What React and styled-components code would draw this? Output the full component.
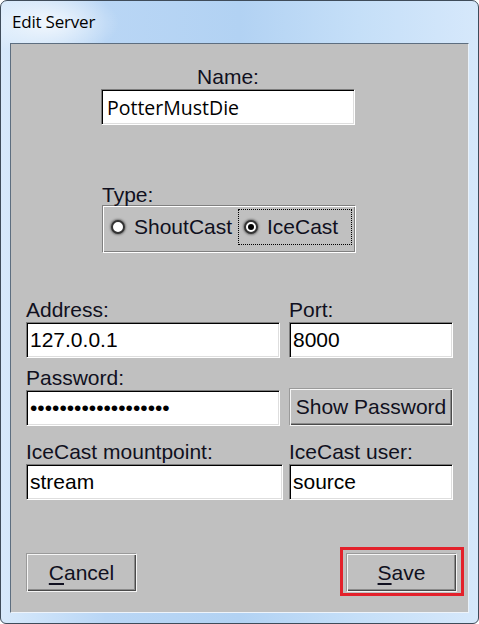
import React from "react";
import styled, { createGlobalStyle } from "styled-components";

const GlobalStyle = createGlobalStyle`
  html, body {
    margin: 0;
    padding: 0;
    background: #ffffff;
  }
  * {
    box-sizing: border-box;
  }
`;

const Window = styled.div`
  width: 479px;
  height: 624px;
  display: flex;
  flex-direction: column;
  padding: 0 9px 10px 9px;
  border: 1px solid #3f4c5a;
  border-radius: 7px 7px 6px 6px;
  background:
    radial-gradient(ellipse 70px 34px at 48px 22px, rgba(255, 255, 255, 0.75), rgba(255, 255, 255, 0) 100%),
    linear-gradient(90deg, #d7e9fb 0%, #b9d6f5 22%, #b2d2f3 50%, #c5dff8 75%, #d6e8fb 100%);
  overflow: hidden;
`;

const TitleBar = styled.div`
  height: 42px;
  flex: none;
  padding: 9px 0 0 2px;
  font: 17px "Open Sans", "Noto Sans", sans-serif;
  letter-spacing: -0.2px;
  color: #000;
`;

const Client = styled.div`
  flex: 1;
  display: flex;
  flex-direction: column;
  background: #c0c0c0;
  border: 1px solid;
  border-color: #5d6e80 #e9f2fb #eef4fb #5d6e80;
`;

const Label = styled.div`
  font: 21px "Liberation Sans", Arial, sans-serif;
  line-height: 24px;
  height: 24px;
  color: #101020;
  white-space: nowrap;
`;

const Entry = styled.input`
  display: block;
  width: ${(p) => p.$w || 254}px;
  height: 36px;
  margin: 0;
  padding: 0 ${(p) => (p.$sans ? 5 : 3)}px;
  border: 1px solid;
  border-color: #7c7c7c #ffffff #ffffff #7c7c7c;
  box-shadow: inset 1px 1px 0 #000, inset -1px -1px 0 #dedede;
  background: #fff;
  color: #000;
  outline: none;
  font: ${(p) => (p.$sans ? '19.5px "Open Sans", "Noto Sans", sans-serif' : '21px "Liberation Sans", Arial, sans-serif')};
`;

const NameBlock = styled.div`
  margin: 21px 0 0 90px;
  width: 254px;
  display: flex;
  flex-direction: column;
  align-items: center;
`;

const TypeBlock = styled.div`
  margin: 58px 0 0 91px;
  width: 254px;
`;

const Group = styled.div`
  margin-top: -2px;
  height: 48px;
  display: flex;
  align-items: flex-start;
  padding: 3px 2px 0 2px;
  border: 1px solid;
  border-color: #808080 #ffffff #ffffff #808080;
  box-shadow: inset 1px 1px 0 #ffffff, inset -1px -1px 0 #808080;
`;

const RadioItem = styled.div`
  width: ${(p) => p.$w}px;
  height: 36px;
  margin-left: ${(p) => p.$ml || 0}px;
  display: flex;
  align-items: center;
  gap: 9px;
  padding: 0 4px;
  border: 1px dotted ${(p) => (p.$focus ? "#000" : "transparent")};
  font: 21px "Liberation Sans", Arial, sans-serif;
  color: #101020;
`;

const Radio = styled.span`
  width: 14px;
  height: 14px;
  margin-left: 1px;
  flex: none;
  border-radius: 50%;
  background: #fff;
  border: 2px solid #333;
  box-shadow: 0 0 2px 1px rgba(60, 60, 60, 0.55);
  display: flex;
  align-items: center;
  justify-content: center;
  &::after {
    content: "";
    width: 6px;
    height: 6px;
    border-radius: 50%;
    background: #000;
    display: ${(p) => (p.$on ? "block" : "none")};
  }
`;

const FieldGrid = styled.div`
  margin: ${(p) => p.$mt}px 0 0 15px;
  display: grid;
  grid-template-columns: 254px 164px;
  column-gap: 9px;
  align-items: start;
`;

const Button = styled.button`
  display: flex;
  align-items: center;
  justify-content: center;
  width: ${(p) => p.$w || 111}px;
  height: ${(p) => p.$h || 39}px;
  margin: ${(p) => p.$m || 0};
  padding: 0;
  background: #c0c0c0;
  border: 1px solid;
  border-color: #9a9a9a #f4f4f4 #f4f4f4 #9a9a9a;
  box-shadow: inset 1px 1px 0 #f6f6f6, inset -1px -1px 0 #4a4a4a, inset -2px -2px 0 #8a8a8a;
  font: 21px "Liberation Sans", Arial, sans-serif;
  color: #101020;
  cursor: default;
  u {
    text-underline-offset: 3px;
  }
`;

const ButtonBar = styled.div`
  margin-top: 47px;
  padding: 0 4px 0 15px;
  display: flex;
  justify-content: space-between;
  align-items: flex-start;
`;

const Highlight = styled.div`
  border: 3px solid #e3212b;
  padding: 3px 4px 1px 3px;
`;

export default function App() {
  return (
    <>
      <GlobalStyle />
      <Window>
        <TitleBar>Edit Server</TitleBar>
        <Client>
          <NameBlock>
            <Label>Name:</Label>
            <Entry $sans value="PotterMustDie" readOnly />
          </NameBlock>

          <TypeBlock>
            <Label>Type:</Label>
            <Group>
              <RadioItem $w={132}>
                <Radio />
                ShoutCast
              </RadioItem>
              <RadioItem $w={114} $ml={1} $focus>
                <Radio $on />
                IceCast
              </RadioItem>
            </Group>
          </TypeBlock>

          <FieldGrid $mt={45}>
            <Label>Address:</Label>
            <Label>Port:</Label>
            <Entry value="127.0.0.1" readOnly />
            <Entry $w={164} value="8000" readOnly />
          </FieldGrid>

          <FieldGrid $mt={8}>
            <Label>Password:</Label>
            <span />
            <Entry value={"\u2022".repeat(19)} readOnly />
            <Button $w={164} $h={38} $m="-2px 0 0 0">
              Show Password
            </Button>
          </FieldGrid>

          <FieldGrid $mt={14}>
            <Label>IceCast mountpoint:</Label>
            <Label>IceCast user:</Label>
            <Entry $w={257} value="stream" readOnly />
            <Entry $w={164} value="source" readOnly />
          </FieldGrid>

          <ButtonBar>
            <Button $m="6px 0 0 0">
              <span>
                <u>C</u>ancel
              </span>
            </Button>
            <Highlight>
              <Button>
                <span>
                  <u>S</u>ave
                </span>
              </Button>
            </Highlight>
          </ButtonBar>
        </Client>
      </Window>
    </>
  );
}
